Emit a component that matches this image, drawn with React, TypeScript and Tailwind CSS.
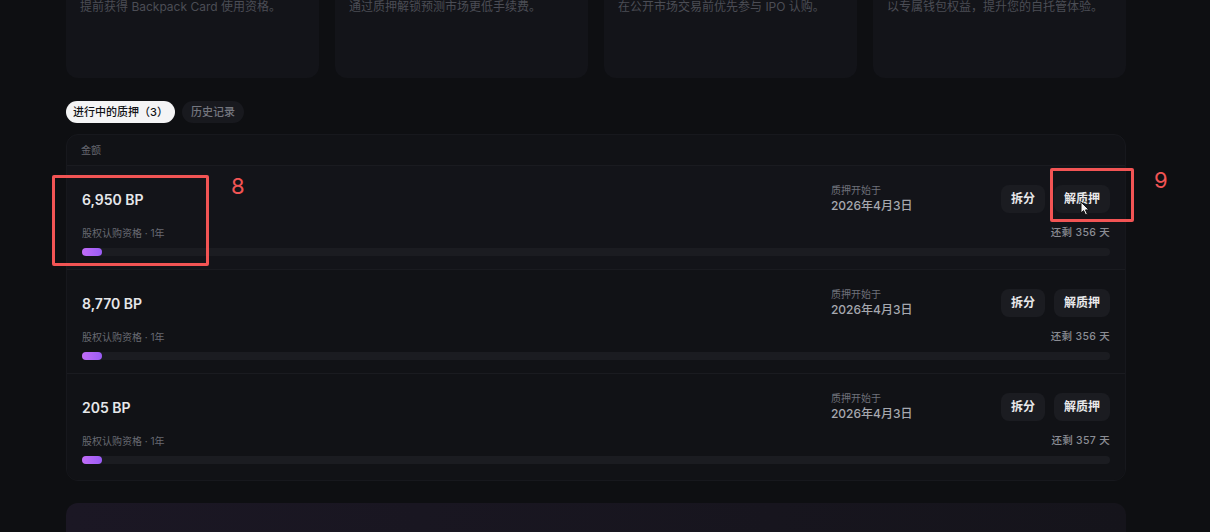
import React from 'react'

// ─── Data ─────────────────────────────────────────────────────────────────────

const PERKS = [
  '提前获得 Backpack Card 使用资格。',
  '通过质押解锁预测市场更低手续费。',
  '在公开市场交易前优先参与 IPO 认购。',
  '以专属钱包权益，提升您的自托管体验。',
]

type Stake = { id: string; amount: string; start: string; left: number }

const STAKES: Stake[] = [
  { id: 's1', amount: '6,950 BP', start: '2026年4月3日', left: 356 },
  { id: 's2', amount: '8,770 BP', start: '2026年4月3日', left: 356 },
  { id: 's3', amount: '205 BP', start: '2026年4月3日', left: 357 },
]

const FONT = { fontFamily: 'Inter, "Noto Sans CJK SC", "Noto Sans", sans-serif' }

// ─── Parts ────────────────────────────────────────────────────────────────────

function StakeRow({ stake, first, last }: { stake: Stake; first: boolean; last: boolean }) {
  return (
    <div
      className={
        'px-[15px] pt-[19px] border-t border-[#1a1b20] ' +
        (last ? 'pb-[16px] ' : 'pb-[13px] ') +
        (first ? 'bg-[#131419]' : 'bg-[#111216]')
      }
    >
      <div className="flex items-center h-7">
        <div className="flex-1 text-[14px] font-semibold text-[#e6e7ea]">{stake.amount}</div>
        <div className="w-[170px] flex flex-col">
          <span className="text-[10px] leading-[14px] text-[#6f717a]">质押开始于</span>
          <span className="text-[12px] leading-[18px] font-medium text-[#a6a8af]">{stake.start}</span>
        </div>
        <div className="flex gap-[9px]">
          <button className="h-7 px-[10px] rounded-lg bg-[#1b1c21] text-[12px] font-bold text-[#e8e8ea]">拆分</button>
          <button className="h-7 px-[10px] rounded-lg bg-[#1b1c21] text-[12px] font-bold text-[#e8e8ea]">解质押</button>
        </div>
      </div>
      <div className="mt-[12px] h-4 flex items-center justify-between">
        <span className="text-[10px] text-[#686a72]">股权认购资格 · 1年</span>
        <span className="text-[10.5px] font-medium text-[#8b8d94] tracking-[0.3px]">还剩 {stake.left} 天</span>
      </div>
      <div className="mt-[7px] h-2 rounded-full bg-[#1b1c21]">
        <div className="h-2 w-[20px] rounded-full bg-gradient-to-r from-[#c26cf8] to-[#9a5cf5]" />
      </div>
    </div>
  )
}

// ─── Page ─────────────────────────────────────────────────────────────────────

export default function App() {
  return (
    <div className="relative h-[532px] overflow-hidden bg-[#0e0f12]" style={FONT}>
      <div className="ml-[66px] w-[1060px]">
        {/* ── Perk cards (top cut off) ── */}
        <div className="-mt-[19px] grid grid-cols-4 gap-4">
          {PERKS.map(t => (
            <div key={t} className="h-[97px] rounded-xl bg-[#131419] px-[14px] pt-[17px]">
              <p className="text-[12px] leading-[18px] text-[#4b4d55]">{t}</p>
            </div>
          ))}
        </div>

        {/* ── Tabs ── */}
        <div className="mt-[23px] flex gap-[7px]">
          <button className="h-[22px] px-[7px] rounded-full bg-[#f4f4f5] text-[11px] font-medium text-[#111216]">进行中的质押（3）</button>
          <button className="h-[22px] px-[9px] rounded-full bg-[#18191e] text-[11px] font-medium text-[#74767e]">历史记录</button>
        </div>

        {/* ── Table ── */}
        <div className="mt-[11px] rounded-xl border border-[#17181d] bg-[#111216] overflow-hidden">
          <div className="h-[30px] px-[14px] flex items-center text-[10px] text-[#666870]">金额</div>
          {STAKES.map((s, i) => (
            <StakeRow key={s.id} stake={s} first={i === 0} last={i === STAKES.length - 1} />
          ))}
        </div>

        {/* ── Bottom banner ── */}
        <div className="mt-[22px] h-[80px] rounded-xl bg-gradient-to-r from-[#1b1724] to-[#15141b]" />
      </div>

      {/* ── Annotations ── */}
      <div className="absolute left-[52px] top-[175px] w-[157px] h-[91px] border-[3px] border-[#f25454] rounded-[2px]" />
      <span className="absolute left-[231px] top-[172px] text-[22px] leading-[28px] text-[#f25454]">8</span>
      <div className="absolute left-[1050px] top-[168px] w-[84px] h-[54px] border-[3px] border-[#f25454] rounded-[2px]" />
      <span className="absolute left-[1154px] top-[166px] text-[22px] leading-[28px] text-[#f25454]">9</span>

      {/* ── Cursor ── */}
      <svg className="absolute left-[1080px] top-[201px]" width="11" height="15" viewBox="0 0 11 15">
        <path d="M1 1 L1 12 L3.6 9.6 L5.6 14 L7.4 13.2 L5.5 8.9 L9 8.9 Z" fill="#f4f4f5" stroke="#111" strokeWidth="1" strokeLinejoin="round" />
      </svg>
    </div>
  )
}
